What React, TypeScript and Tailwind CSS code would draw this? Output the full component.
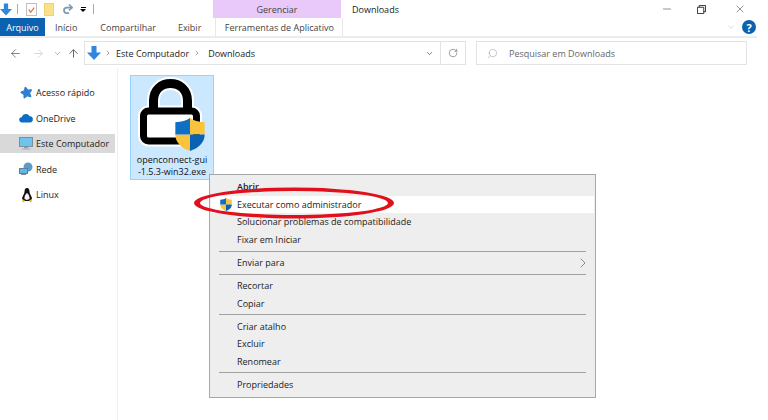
import { ArrowLeft, ArrowRight, ArrowUp, ChevronDown, ChevronRight, Redo2, RotateCw, Search, Minus, X, Star } from "lucide-react";

const DownArrow = ({ className }: { className?: string }) => (
  <svg viewBox="0 0 14 14" className={className}>
    <path d="M4.500 0h5v6.500H14L7 14 0 6.500h4.500z" fill="#2f86dc" />
  </svg>
);

const Shield = ({ className }: { className?: string }) => (
  <svg viewBox="0 0 32 36" className={className}>
    <path d="M16 0c4 3 9 4.500 16 4.500V18H16z" fill="#f9c33c" />
    <path d="M16 18H0c0 9 7 15 16 18z" fill="#f9c33c" />
    <path d="M16 18h16c0 9-7 15-16 18z" fill="#0b62b5" />
    <path d="M16 0c-4 3-9 4.500-16 4.500V18h16z" fill="#0f6fc6" />
  </svg>
);

const LockIcon = () => (
  <svg viewBox="0 0 80 78" className="w-[80px] h-[78px]">
    <path d="M21.500 36V25C21.500 13 30 7.500 38.500 7.500S55.500 13 55.500 25V36" fill="none" stroke="#fff" strokeWidth="13" />
    <rect x="11.500" y="35" width="53" height="30" rx="5" fill="none" stroke="#fff" strokeWidth="11" />
    <path d="M21.500 36V25C21.500 13 30 7.500 38.500 7.500S55.500 13 55.500 25V36" fill="none" stroke="#000" strokeWidth="9" />
    <rect x="11.500" y="35" width="53" height="30" rx="5" fill="#fff" stroke="#000" strokeWidth="7" />
  </svg>
);

const sideItems = [
  { label: "Acesso rápido", icon: <Star className="w-[13px] h-[13px] text-[#2f7fd0] fill-[#2f7fd0] -rotate-12" /> },
  {
    label: "OneDrive",
    icon: (
      <svg viewBox="0 0 16 10" className="w-[14px] h-[10px]">
        <path d="M3.500 10a3 3 0 0 1-.5-6 5 5 0 0 1 9.200-1A3.500 3.500 0 0 1 12.500 10z" fill="#0d6cc4" />
      </svg>
    ),
  },
  {
    label: "Este Computador",
    icon: (
      <svg viewBox="0 0 14 13" className="w-[14px] h-[13px]">
        <rect x="0.500" y="0.500" width="13" height="9" fill="#6fc3ee" stroke="#7d8f9d" />
        <rect x="5" y="10" width="4" height="1.500" fill="#8fa2ae" />
        <rect x="2.500" y="11.500" width="9" height="1" fill="#a5b4be" />
      </svg>
    ),
    active: true,
  },
  {
    label: "Rede",
    icon: (
      <svg viewBox="0 0 14 14" className="w-[14px] h-[14px]">
        <circle cx="9" cy="5" r="4.500" fill="#5a9bc7" />
        <rect x="0.500" y="6.500" width="8" height="5" fill="#63b7e6" stroke="#5f7f96" />
        <rect x="2" y="12" width="5" height="1" fill="#7d8f9d" />
      </svg>
    ),
  },
  {
    label: "Linux",
    icon: (
      <svg viewBox="0 0 12 14" className="w-[12px] h-[14px]">
        <path d="M6 0c2 0 2.500 2 2.500 4 0 2 2.500 4 2.500 7l-2 2H3l-2-2c0-3 2.500-5 2.500-7C3.500 2 4 0 6 0z" fill="#111" />
        <path d="M6 5c1.500 1 3 3.500 2.500 6L6 12l-2.500-1C3 8.500 4.500 6 6 5z" fill="#f3f3f3" />
        <path d="M1 11l3 1.500L3 14H1.500zM11 11l-3 1.500L9 14h1.500z" fill="#eeb422" />
      </svg>
    ),
  },
];

const MenuItem = ({ label, bold, active, arrow }: { label: string; bold?: boolean; active?: boolean; arrow?: boolean }) => (
  <div className={`h-[17.6px] flex items-center pl-[26px] pr-[3px] relative ${active ? "bg-white" : ""}`}>
    {active && <Shield className="absolute left-[9px] top-[2px] w-[12px] h-[13px]" />}
    <span className={bold ? "font-semibold" : ""}>{label}</span>
    {arrow && <ChevronRight strokeWidth={1} className="ml-auto w-[16px] h-[16px] text-[#555]" />}
  </div>
);

const MenuSep = () => <div className="h-px bg-[#a0a0a0] mx-[8px] my-[2.200px]" />;

export default function App() {
  return (
    <div className="w-[768px] h-[420px] bg-white relative overflow-hidden text-[9px] leading-none text-[#222]" style={{ fontFamily: '"Open Sans", "Noto Sans", sans-serif' }}>
      <div className="w-[757px]">
        {/* title bar */}
        <div className="h-[18px] flex items-center relative">
          <DownArrow className="w-[12px] h-[13px]" />
          <div className="w-px h-[10px] bg-[#aaa] ml-[5px]" />
          <svg viewBox="0 0 12 14" className="w-[11px] h-[13px] ml-[8px]">
            <rect x="0.500" y="0.500" width="11" height="13" fill="#fff" stroke="#bbb" />
            <path d="M3 7l2 3 4-5" fill="none" stroke="#e0693f" strokeWidth="1.300" />
          </svg>
          <div className="w-[10px] h-[13px] ml-[7px] bg-[#fbe08a] border border-[#eed27a]" />
          <Redo2 strokeWidth={3.500} className="w-[12px] h-[12px] ml-[8px] text-[#7a9ab5]" />
          <div className="ml-[6px] flex flex-col items-center gap-[1px]">
            <div className="w-[5px] h-px bg-black" />
            <div className="w-0 h-0 border-l-[3px] border-r-[3px] border-t-[3px] border-l-transparent border-r-transparent border-t-black" />
          </div>
          <div className="w-px h-[10px] bg-[#aaa] ml-[7px]" />
          <div className="ml-[119px] w-[128px] h-[18px] bg-[#e9c9f9] flex items-center justify-center text-[#444]">Gerenciar</div>
          <span className="ml-[11px]">Downloads</span>
          <div className="ml-auto flex items-center">
            <Minus strokeWidth={1} className="w-[12px] h-[12px]" />
            <svg viewBox="0 0 10 10" className="w-[9px] h-[9px] ml-[24px]">
              <path d="M.5 2.500h7v7h-7zM2.500 2.500v-2h7v7h-2" fill="none" stroke="#222" />
            </svg>
            <X strokeWidth={1} className="w-[12px] h-[12px] ml-[28px] mr-[11px]" />
          </div>
        </div>
        {/* ribbon tabs */}
        <div className="h-[18px] flex items-center relative">
          <div className="w-[45px] h-[18px] bg-[#0a62b0] text-white flex items-center justify-center">Arquivo</div>
          <span className="ml-[10px] text-[#444]">Início</span>
          <span className="ml-[23px] text-[#444]">Compartilhar</span>
          <span className="ml-[22px] text-[#444]">Exibir</span>
          <div className="ml-[14px] w-[128px] h-[18px] border-l border-r border-[#e8e8e8] flex items-center justify-center text-[#444]">Ferramentas de Aplicativo</div>
          <ChevronDown strokeWidth={1} className="ml-auto w-[10px] h-[10px] text-[#aaa]" />
          <div className="ml-[6px] mr-[1px] w-[14px] h-[14px] rounded-full bg-[#0a62b0] text-white font-bold text-[11px] flex items-center justify-center">?</div>
        </div>
        <div className="h-[2px] bg-[#ececec]" />
        {/* address row */}
        <div className="h-[30px] flex items-center">
          <ArrowLeft strokeWidth={1.500} className="ml-[9px] w-[13px] h-[13px] text-[#666]" />
          <ArrowRight strokeWidth={1.500} className="ml-[10px] w-[13px] h-[13px] text-[#d0d0d0]" />
          <ChevronDown strokeWidth={2} className="ml-[8px] w-[9px] h-[9px] text-[#999]" />
          <ArrowUp strokeWidth={1.800} className="ml-[5px] w-[13px] h-[13px] text-[#666]" />
          <div className="ml-[4px] w-[382px] h-[24px] border border-[#e3e3e3] flex items-center">
            <DownArrow className="ml-[2px] w-[14px] h-[14px]" />
            <ChevronRight strokeWidth={2} className="ml-[3px] w-[8px] h-[8px] text-[#777]" />
            <span className="ml-[4px]">Este Computador</span>
            <ChevronRight strokeWidth={2} className="ml-[4px] w-[8px] h-[8px] text-[#777]" />
            <span className="ml-[7px]">Downloads</span>
            <ChevronDown strokeWidth={2} className="ml-auto mr-[6px] w-[9px] h-[9px] text-[#555]" />
            <div className="w-px h-full bg-[#e3e3e3]" />
            <RotateCw strokeWidth={1.500} className="mx-[7px] w-[10px] h-[10px] text-[#666]" />
          </div>
          <div className="ml-[10px] w-[271px] h-[24px] border border-[#e3e3e3] flex items-center">
            <Search strokeWidth={1} className="ml-[10px] w-[11px] h-[11px] text-[#888] -scale-x-100" />
            <span className="ml-[11px] text-[#666]">Pesquisar em Downloads</span>
          </div>
        </div>
      </div>
      {/* body */}
      <div className="flex h-[352px]">
        <div className="w-[118px] border-r border-[#f0f0f0] pt-[15px] flex flex-col gap-[6.500px]">
          {sideItems.map((item) => (
            <div key={item.label} className={`w-[115px] h-[19px] flex items-center ${item.active ? "bg-[#d9d9d9]" : ""}`}>
              <div className="w-[36px] flex justify-end pr-[3px]">{item.icon}</div>
              <span>{item.label}</span>
            </div>
          ))}
        </div>
        <div className="pl-[12px] pt-[7px]">
          <div className="w-[84px] h-[105px] bg-[#cce8ff] border border-[#99d1ff] flex flex-col items-center relative">
            <LockIcon />
            <Shield className="absolute left-[43px] top-[42px] w-[32px] h-[33px]" />
            <div className="text-center leading-[12px] text-[#111]">
              openconnect-gui
              <br />
              -1.5.3-win32.exe
            </div>
          </div>
        </div>
      </div>
      {/* context menu */}
      <div className="absolute left-[209px] top-[174px] w-[387px] h-[224px] bg-[#eeeeee] border border-[#a8a8a8] pt-[3px] px-[1px]">
        <MenuItem label="Abrir" bold />
        <MenuItem label="Executar como administrador" active />
        <MenuItem label="Solucionar problemas de compatibilidade" />
        <MenuItem label="Fixar em Iniciar" />
        <MenuSep />
        <MenuItem label="Enviar para" arrow />
        <MenuSep />
        <MenuItem label="Recortar" />
        <MenuItem label="Copiar" />
        <MenuSep />
        <MenuItem label="Criar atalho" />
        <MenuItem label="Excluir" />
        <MenuItem label="Renomear" />
        <MenuSep />
        <MenuItem label="Propriedades" />
      </div>
      {/* red marker ellipse */}
      <svg className="absolute left-[190px] top-[182px] w-[210px] h-[42px]" viewBox="0 0 210 42">
        <path
          fillRule="evenodd"
          fill="#e2101c"
          d="M4 21a100 15.500 0 1 0 200 0a100 15.500 0 1 0-200 0zM10 21a94 12 0 1 1 188 0a94 12 0 1 1-188 0z"
        />
      </svg>
    </div>
  );
}
